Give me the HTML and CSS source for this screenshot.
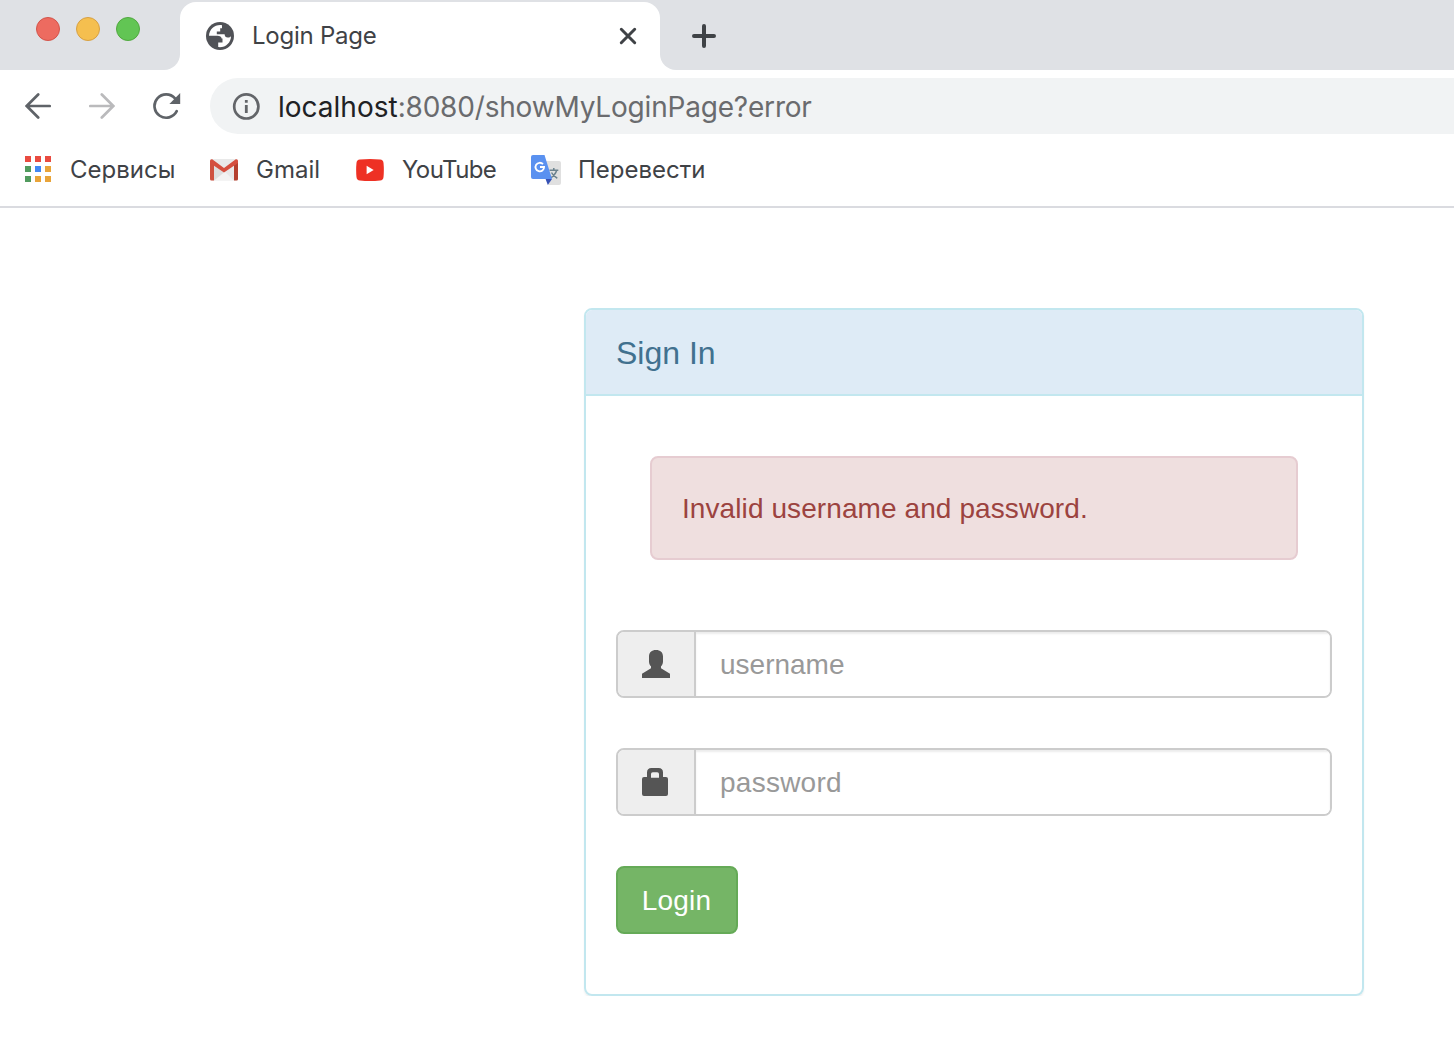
FILE: index.html
```html
<!DOCTYPE html>
<html lang="ru">
<head>
<meta charset="utf-8">
<title>Login Page</title>
<link rel="stylesheet" href="styles.css">
</head>
<body>
<header class="browser">
  <div class="tabstrip">
    <div class="window-controls">
      <span class="light light-red"></span>
      <span class="light light-yellow"></span>
      <span class="light light-green"></span>
    </div>
    <div class="tab-slot">
      <div class="tab">
        <svg class="globe" width="28" height="28" viewBox="0 0 28 28"><circle cx="14" cy="14" r="14" fill="#505257"/><path d="M16 3.200C9.200 2.200 3.300 7 3 13.800h8.400c2.600 0 4 .9 4.200 2.600h.9v4.200h-4.300v4.500C19 26 25 21 25 14.200c-.8 1-1.900 1.500-3.300 1.400-1.900-.1-2.900-1-3.100-3.300h-7.800V9.400h3.400V6.300h1.800z" fill="#fff"/></svg>
        <span class="tab-title">Login Page</span>
        <svg class="close" width="18" height="18" viewBox="0 0 18 18"><path d="M2.300 2.300l13.400 13.400M15.700 2.300L2.300 15.700" stroke="#3f4246" stroke-width="3" stroke-linecap="round"/></svg>
      </div>
    </div>
    <div class="new-tab">
      <svg width="24" height="24" viewBox="0 0 24 24"><path d="M12 2v20M2 12h20" stroke="#3f4246" stroke-width="4" stroke-linecap="round"/></svg>
    </div>
  </div>
  <div class="toolbar">
    <svg class="back" width="26" height="26" viewBox="0 0 26 26"><path d="M24.700 13H2M13.200 1.500L1.700 13l11.500 11.500" fill="none" stroke="#5f6368" stroke-width="2.700" stroke-linecap="round"/></svg>
    <svg class="forward" width="26" height="26" viewBox="0 0 26 26"><path d="M1.300 13H24M12.800 1.500L24.300 13 12.800 24.500" fill="none" stroke="#bababc" stroke-width="2.700" stroke-linecap="round"/></svg>
    <svg class="reload" width="28" height="28" viewBox="0 0 28 28"><path d="M23.700 19.200A11.700 11.700 0 1 1 22 6.300" fill="none" stroke="#5f6368" stroke-width="2.700" stroke-linecap="round"/><path d="M27.200 1v11H16.400z" fill="#5f6368"/></svg>
    <div class="address">
      <svg width="28" height="28" viewBox="0 0 28 28"><circle cx="14.300" cy="14.400" r="12.100" fill="none" stroke="#636569" stroke-width="2.700"/><path d="M12.900 7.900h2.800v2.900h-2.800zM12.900 13h2.800v8h-2.800z" fill="#636569"/></svg>
      <span class="url"><span class="host">localhost</span>:8080/showMyLoginPage?error</span>
    </div>
  </div>
  <nav class="bookmarks">
    <a class="bookmark apps">
      <svg width="26" height="26" viewBox="0 0 26 26"><path d="M0 0h6v6H0zM10 0h6v6h-6zM20 0h6v6h-6z" fill="#e94b40"/><path d="M0 10h6v6H0zM0 20h6v6H0z" fill="#519b5e"/><path d="M10 10h6v6h-6z" fill="#4388f3"/><path d="M20 10h6v6h-6zM10 20h6v6h-6zM20 20h6v6h-6z" fill="#e9a439"/></svg>
      <span class="label">Сервисы</span>
    </a>
    <a class="bookmark gmail">
      <svg width="28" height="22" viewBox="0 0 28 22"><rect width="28" height="21.500" rx="1.800" fill="#e9e9e9"/><path d="M4 21.500l10-9.500 10 9.500z" fill="#f3f3f3"/><path d="M4 5l10 8.500L4 21.500z" fill="#dedede"/><path d="M0 1.500L4 4.700v16.800H1.500Q0 21.500 0 20z" fill="#cf5140"/><path d="M28 1.500l-4 3.200v16.800h2.500Q28 21.500 28 20z" fill="#b5402f"/><path d="M0 2Q0 0 2.200.3L14 9.100 25.800.3Q28 0 28 2v2L14 13.500 0 4z" fill="#d54f3f"/></svg>
      <span class="label">Gmail</span>
    </a>
    <a class="bookmark youtube">
      <svg width="28" height="22" viewBox="0 0 29 22" preserveAspectRatio="none"><path d="M4 .5Q14.500-.5 25 .5q3.200.3 3.500 3.500.7 7 0 14-.3 3.200-3.500 3.500-10.500 1-21 0Q.8 21.200.5 18q-.7-7 0-14Q.8.8 4 .5z" fill="#ee3124"/><path d="M11 6.700v8.600l7.300-4.300z" fill="#fff"/></svg>
      <span class="label">YouTube</span>
    </a>
    <a class="bookmark translate">
      <svg width="30" height="30" viewBox="0 0 30 30"><path d="M11 6h17q2 0 2 2v20q0 2-2 2H17.500z" fill="#e0e0e0"/><path d="M18.500 15.300h8.800M22.800 13v2.300M25.700 15.300q-1.300 4.700-6.500 8M20.500 17.500q2 4 5.800 5.800" fill="none" stroke="#6b828e" stroke-width="1.500"/><path d="M14.600 24H21l-4.200 6z" fill="#3651b5"/><path d="M2 0h11.500L21 24H2q-2 0-2-2V2Q0 0 2 0z" fill="#5a91f0"/><path d="M12 9.200A4.300 4.300 0 1 0 13.100 12H9" fill="none" stroke="#fff" stroke-width="1.800"/></svg>
      <span class="label">Перевести</span>
    </a>
  </nav>
</header>
<main class="page">
  <section class="panel">
    <h1 class="panel-heading">Sign In</h1>
    <form class="panel-body">
      <div class="alert">Invalid username and password.</div>
      <div class="input-group">
        <span class="addon"><svg width="28" height="28" viewBox="0 0 28 28"><path d="M14 0c4.300 0 7 2.300 7 6.600v4.800c0 2.300-.8 3.700-2 4.900v2l9 5.400V28H0v-4.300l9-5.400v-2c-1.200-1.200-2-2.600-2-4.900V6.600C7 2.300 9.700 0 14 0z" fill="#555"/></svg></span>
        <input class="control" type="text" placeholder="username">
      </div>
      <div class="input-group">
        <span class="addon"><svg width="28" height="28" viewBox="0 0 28 28"><path fill-rule="evenodd" d="M5 9V4.500Q5 0 9.500 0h7Q21 0 21 4.500V9h3q2 0 2 2v15q0 2-2 2H2q-2 0-2-2V11q0-2 2-2zM9 9.700h8V6q0-1.800-1.800-1.800h-4.400Q9 4.200 9 6z" fill="#555"/></svg></span>
        <input class="control password" type="password" placeholder="password">
      </div>
      <button class="login" type="button">Login</button>
    </form>
  </section>
</main>
</body>
</html>
```
FILE: styles.css
```css
* { box-sizing: border-box; }
body {
  margin: 0;
  background: #fff;
  font-family: "Liberation Sans", Arial, sans-serif;
  font-size: 28px;
  overflow: hidden;
}
svg { display: block; flex: none; }
.browser {
  height: 208px;
  border-bottom: 2px solid #dadbe0;
  font-family: Inter, "Noto Sans", sans-serif;
  color: #3f4246;
}
.tabstrip { display: flex; height: 70px; }
.window-controls {
  width: 180px;
  display: flex;
  gap: 16px;
  padding: 17px 0 0 36px;
  background: #dfe1e5;
  border-bottom-right-radius: 16px;
}
.light { width: 24px; height: 24px; border-radius: 50%; border: 1px solid; }
.light-red { background: #ed6b60; border-color: #d3544a; }
.light-yellow { background: #f5bf4f; border-color: #d7a043; }
.light-green { background: #62c554; border-color: #51a83f; }
.tab-slot {
  width: 480px;
  padding-top: 2px;
  background: linear-gradient(#dfe1e5 50%, #fff 50%);
}
.tab {
  height: 68px;
  display: flex;
  align-items: center;
  padding: 0 23px 0 26px;
  background: #fff;
  border-radius: 16px 16px 0 0;
}
.tab-title {
  flex: 1;
  margin-left: 18px;
  padding-bottom: 2px;
  font-size: 24px;
  letter-spacing: -.25px;
}
.new-tab {
  flex: 1;
  padding: 24px 0 0 32px;
  background: #dfe1e5;
  border-bottom-left-radius: 16px;
}
.toolbar { display: flex; align-items: center; height: 64px; padding: 8px 0 0 25px; }
.back, .forward, .reload { margin-bottom: 1px; }
.forward { margin-left: 38px; }
.reload { margin-left: 38px; }
.address {
  flex: 1;
  display: flex;
  align-items: center;
  height: 56px;
  margin-left: 29px;
  padding-left: 22px;
  background: #f1f3f4;
  border-radius: 28px 0 0 28px;
}
.url {
  margin-left: 18px;
  padding-top: 1px;
  font-size: 28px;
  letter-spacing: -.19px;
  color: #6a6b6e;
  white-space: nowrap;
}
.host { color: #202124; letter-spacing: 0; }
.bookmarks { display: flex; height: 72px; padding-left: 25px; font-size: 24px; }
.bookmark { display: flex; align-items: center; height: 72px; white-space: nowrap; }
.label { padding-bottom: 1px; }
.apps { width: 185px; gap: 19px; }
.apps svg { margin-bottom: 2px; }
.gmail { width: 146px; gap: 18px; }
.youtube { width: 175px; gap: 18px; letter-spacing: -.6px; }
.translate { gap: 17px; }
.page { padding: 100px 90px 0 584px; }
.panel {
  height: 688px;
  border: 2px solid #c2e7ef;
  border-radius: 8px;
  box-shadow: 0 2px 2px rgba(0, 0, 0, .06);
}
.panel-heading {
  margin: 0;
  height: 86px;
  padding: 25px 30px 0;
  border-bottom: 2px solid #c2e7ef;
  border-radius: 6px 6px 0 0;
  background: #deebf6;
  color: #41718f;
  font-size: 32px;
  font-weight: 400;
  line-height: 36px;
}
.panel-body { display: flex; flex-direction: column; padding: 60px 30px 0; }
.alert {
  height: 104px;
  margin: 0 34px 70px;
  padding: 31px 30px;
  border: 2px solid #e6ccd1;
  border-radius: 8px;
  background: #efdfdf;
  color: #9c4340;
  line-height: 40px;
  letter-spacing: .09px;
}
.input-group {
  display: flex;
  height: 68px;
  margin-bottom: 50px;
  border: 2px solid #ccc;
  border-radius: 8px;
  overflow: hidden;
}
.addon {
  width: 78px;
  display: flex;
  align-items: center;
  padding-left: 24px;
  background: #eee;
  border-right: 2px solid #ccc;
}
.control {
  flex: 1;
  min-width: 0;
  padding: 2px 24px 0;
  border: 0;
  background: #fff;
  box-shadow: inset 0 2px 2px rgba(0, 0, 0, .075);
  font: inherit;
  color: #555;
}
.control::placeholder { color: #999; }
.password { letter-spacing: .25px; }
.login {
  width: 122px;
  height: 68px;
  padding: 2px 1px 0 0;
  border: 2px solid #65aa57;
  border-radius: 8px;
  background: #75b566;
  color: #fff;
  font: inherit;
  letter-spacing: .2px;
}
```
